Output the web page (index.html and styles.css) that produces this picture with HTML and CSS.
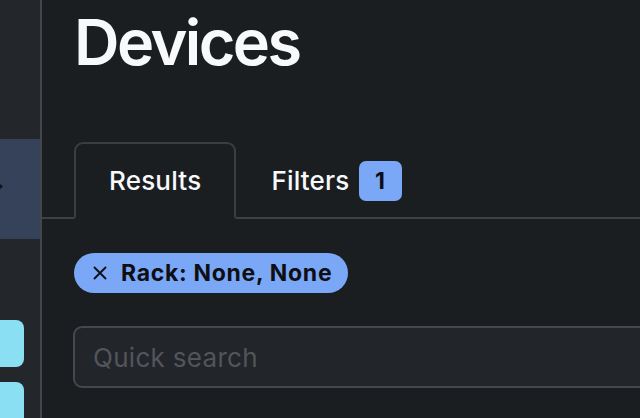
FILE: index.html
```html
<!DOCTYPE html>
<html>
<head>
<meta charset="utf-8">
<link rel="stylesheet" href="styles.css">
</head>
<body>
<div class="app">
  <aside class="sidebar">
    <div class="nav-active"><span class="nav-caret"></span></div>
    <div class="nav-tiles">
      <div class="tile"></div>
      <div class="tile"></div>
    </div>
  </aside>
  <main class="main">
    <h1 class="title">Devices</h1>
    <div class="tabs">
      <div class="tab tab-active">Results</div>
      <div class="tab">Filters <span class="badge">1</span></div>
    </div>
    <div class="chips">
      <span class="chip"><svg class="chip-x" width="14" height="14" viewBox="0 0 14 14"><path d="M1.5 1.5 L12.5 12.5 M12.5 1.5 L1.5 12.5" stroke="#0d0f12" stroke-width="1.8" stroke-linecap="round" fill="none"/></svg>Rack: None, None</span>
    </div>
    <div class="search">
      <input class="search-input" type="text" placeholder="Quick search">
    </div>
  </main>
</div>
</body>
</html>
```
FILE: styles.css
```css
html, body {
  margin: 0;
  padding: 0;
  background: #1b1e21;
  overflow: hidden;
  height: 418px;
}
.app {
  display: flex;
  height: 418px;
  overflow: hidden;
  font-family: Inter, "Noto Sans", sans-serif;
}
.sidebar {
  width: 40px;
  flex: none;
  background: #23262b;
  border-right: 2px solid #43464b;
  display: flex;
  flex-direction: column;
}
.nav-active {
  flex: none;
  margin-top: 139px;
  height: 100px;
  background: #354259;
  position: relative;
}
.nav-caret {
  position: absolute;
  left: 0;
  top: 45px;
  width: 3px;
  height: 5px;
  background: #111;
  clip-path: polygon(0 0, 100% 50%, 0 100%);
}
.nav-tiles {
  flex: none;
  margin-top: 81px;
  display: flex;
  flex-direction: column;
  gap: 15px;
}
.tile {
  flex: none;
  width: 24px;
  height: 47px;
  background: #8adff3;
  border-radius: 0 8px 8px 0;
}
.main {
  flex: none;
  width: 700px;
  padding-left: 32px;
  color: #f8f9fb;
}
.title {
  margin: 0;
  padding-top: 4px;
  font-size: 63px;
  font-weight: 600;
  line-height: normal;
  letter-spacing: -2.6px;
}
.tabs {
  margin-top: 62px;
  margin-left: -32px;
  padding-left: 32px;
  display: flex;
  border-bottom: 2px solid #3d4045;
}
.tab {
  height: 73px;
  padding: 0 33px;
  display: flex;
  align-items: center;
  gap: 9px;
  font-size: 26px;
  font-weight: 500;
  letter-spacing: 0.2px;
  color: #f8f9fb;
  border: 2px solid transparent;
  border-bottom: none;
  border-radius: 9px 9px 0 0;
  margin-bottom: -2px;
  box-sizing: content-box;
}
.tab-active {
  border-color: #3a3d42;
  background: #1b1e21;
  border-bottom: 2px solid #1b1e21;
  height: 73px;
}
.badge {
  display: inline-flex;
  align-items: center;
  justify-content: center;
  width: 43px;
  height: 40px;
  border-radius: 7px;
  background: #7ba7f7;
  color: #0d0f12;
  font-weight: 700;
  font-size: 23px;
}
.chips {
  margin-top: 34px;
  display: flex;
}
.chip {
  display: inline-flex;
  align-items: center;
  height: 40px;
  padding: 0 16px 0 19px;
  border-radius: 20px;
  background: #7ba7f7;
  color: #0d0f12;
  font-weight: 700;
  font-size: 23px;
  letter-spacing: 0.7px;
}
.chip-x {
  flex: none;
  margin-right: 14px;
}
.search {
  margin-top: 33px;
}
.search-input {
  box-sizing: border-box;
  width: 640px;
  height: 62px;
  margin-left: -1px;
  padding: 0 18px;
  border: 2px solid #45484d;
  border-radius: 9px;
  background: #22252a;
  color: #f8f9fb;
  font-family: Inter, "Noto Sans", sans-serif;
  font-size: 26px;
  letter-spacing: 0.3px;
  outline: none;
}
.search-input::placeholder {
  color: #52555a;
}
```
